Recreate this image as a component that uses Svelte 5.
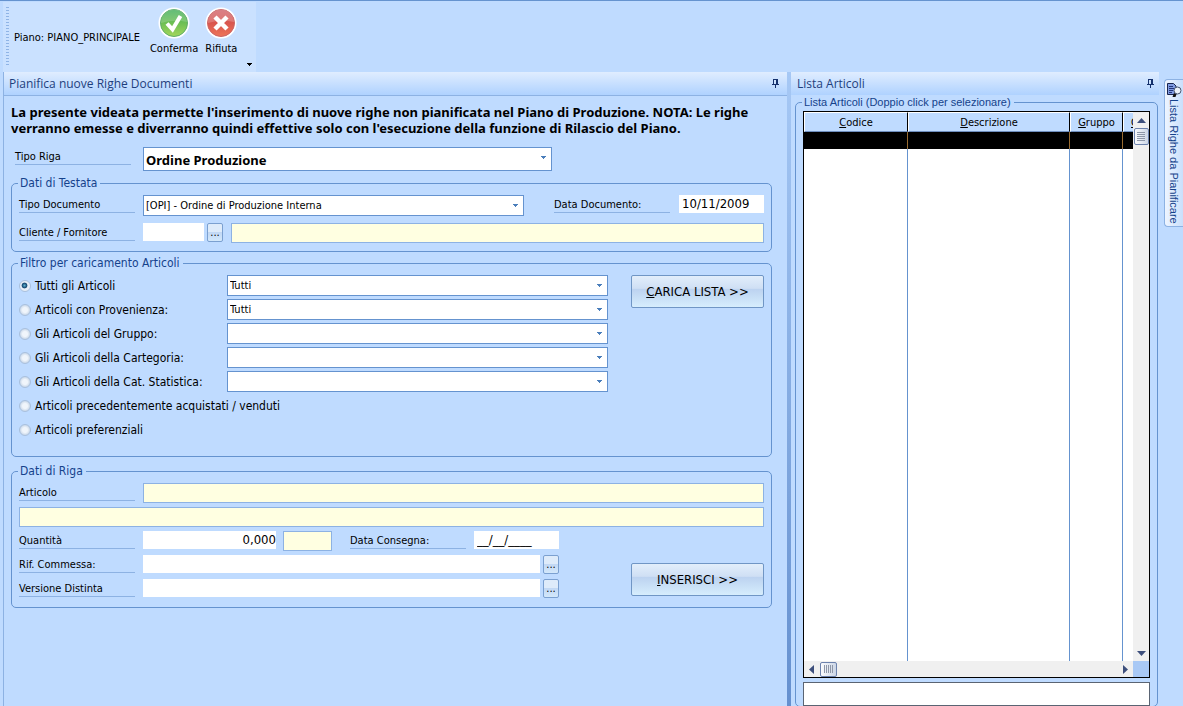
<script>
	let rowType = $state("Ordine Produzione");
	let docType = $state("[OPI] - Ordine di Produzione Interna");
	let docDate = $state("10/11/2009");
	let quantity = $state("0,000");
	let deliveryDate = $state("__/__/____");
	let filter = $state("tutti");

	const filters = [
		{ id: "tutti", label: "Tutti gli Articoli", options: ["Tutti"] },
		{ id: "provenienza", label: "Articoli con Provenienza:", options: ["Tutti"] },
		{ id: "gruppo", label: "Gli Articoli del Gruppo:", options: [""] },
		{ id: "categoria", label: "Gli Articoli della Cartegoria:", options: [""] },
		{ id: "statistica", label: "Gli Articoli della Cat. Statistica:", options: [""] },
		{ id: "precedenti", label: "Articoli precedentemente acquistati / venduti" },
		{ id: "preferenziali", label: "Articoli preferenziali" }
	];
</script>

{#snippet caret()}
	<svg class="caret" width="5" height="3" viewBox="0 0 5 3" shape-rendering="crispEdges"><path d="M0 0h5v1h-1v1h-1v1h-1v-1h-1v-1h-1z" fill="#4a7ebb" /></svg>
{/snippet}

{#snippet pin()}
	<button class="pin" aria-label="Blocca pannello">
		<svg width="7" height="9" viewBox="0 0 7 9" shape-rendering="crispEdges"><path d="M1 0h5v5h1v1h-3v3h-1v-3h-3v-1h1zM2 1v4h2v-4z" fill="#15316d" fill-rule="evenodd" /></svg>
	</button>
{/snippet}

<div class="window">
	<header>
		<div class="toolbar">
			<div class="grip"></div>
			<span class="plan">Piano: PIANO_PRINCIPALE</span>
			<button class="tool">
				<svg width="32" height="32" viewBox="0 0 32 32">
					<defs>
						<linearGradient id="ok" x1="0" y1="0" x2="0" y2="1">
							<stop offset="0" stop-color="#3fae5a" />
							<stop offset=".5" stop-color="#6dbf54" />
							<stop offset="1" stop-color="#a3d65a" />
						</linearGradient>
					</defs>
					<circle cx="16" cy="16" r="15.5" fill="#fff" />
					<circle cx="16" cy="16" r="13.5" fill="url(#ok)" stroke="#5fae68" />
					<path d="M3 16a13 13 0 0 1 26-1q-13-3-26 1z" fill="#fff" opacity=".18" />
					<path d="M9 16.500l5.500 6L22.500 9" fill="none" stroke="#fff" stroke-width="4" />
				</svg>
				Conferma
			</button>
			<button class="tool">
				<svg width="32" height="32" viewBox="0 0 32 32">
					<defs>
						<linearGradient id="no" x1="0" y1="0" x2="0" y2="1">
							<stop offset="0" stop-color="#cf6068" />
							<stop offset=".5" stop-color="#d9564e" />
							<stop offset="1" stop-color="#ee7558" />
						</linearGradient>
					</defs>
					<circle cx="16" cy="16" r="15.500" fill="#fff" />
					<circle cx="16" cy="16" r="13.500" fill="url(#no)" stroke="#cc6464" />
					<path d="M3 16a13 13 0 0 1 26-1q-13-3-26 1z" fill="#fff" opacity=".2" />
					<path d="M10 10l12 12m0-12l-12 12" stroke="#fff" stroke-width="4.500" />
				</svg>
				Rifiuta
			</button>
			<button class="more" aria-label="Altri comandi">
				<svg width="5" height="3" viewBox="0 0 5 3" shape-rendering="crispEdges"><path d="M0 0h5v1h-1v1h-1v1h-1v-1h-1v-1h-1z" /></svg>
			</button>
		</div>
	</header>

	<main>
		<section class="panel plan-panel">
			<div class="title"><h1>Pianifica nuove Righe Documenti</h1>{@render pin()}</div>
			<form class="body" onsubmit={(e) => e.preventDefault()}>
				<p class="intro">La presente videata permette l'inserimento di nuove righe non pianificata nel Piano di Produzione. NOTA: Le righe verranno emesse e diverranno quindi effettive solo con l'esecuzione della funzione di Rilascio del Piano.</p>

				<div class="line first">
					<label class="caption" for="rowType">Tipo Riga</label>
					<div class="combo large">
						<select id="rowType" bind:value={rowType}><option>Ordine Produzione</option></select>
						{@render caret()}
					</div>
				</div>

				<fieldset class="header-data">
					<legend>Dati di Testata</legend>
					<div class="rows">
						<div class="line">
							<label class="caption" for="docType">Tipo Documento</label>
							<div class="combo">
								<select id="docType" bind:value={docType}><option>[OPI] - Ordine di Produzione Interna</option></select>
								{@render caret()}
							</div>
							<label class="caption date-caption" for="docDate">Data Documento:</label>
							<input class="date" id="docDate" bind:value={docDate} />
						</div>
						<div class="line">
							<label class="caption" for="customer">Cliente / Fornitore</label>
							<input class="code" id="customer" />
							<button class="browse" aria-label="Cerca cliente">...</button>
							<input class="locked" aria-label="Ragione sociale" readonly />
						</div>
					</div>
				</fieldset>

				<fieldset class="filter">
					<legend>Filtro per caricamento Articoli</legend>
					<div class="split">
						<div class="rows">
							{#each filters as f}
								<div class="option">
									<label><input type="radio" name="filter" value={f.id} bind:group={filter} />{f.label}</label>
									{#if f.options}
										<div class="combo">
											<select aria-label={f.label}>
												{#each f.options as o}<option>{o}</option>{/each}
											</select>
											{@render caret()}
										</div>
									{/if}
								</div>
							{/each}
						</div>
						<button class="action"><span><u>C</u>ARICA LISTA &gt;&gt;</span></button>
					</div>
				</fieldset>

				<fieldset class="row-data">
					<legend>Dati di Riga</legend>
					<div class="rows">
						<div class="line">
							<label class="caption" for="article">Articolo</label>
							<input class="locked" id="article" readonly />
						</div>
						<div class="line">
							<input class="locked" aria-label="Descrizione articolo" readonly />
						</div>
						<div class="split">
							<div class="rows">
								<div class="line">
									<label class="caption" for="quantity">Quantità</label>
									<input class="quantity" id="quantity" bind:value={quantity} />
									<input class="locked unit" aria-label="Unità di misura" readonly />
									<label class="caption" for="delivery">Data Consegna:</label>
									<input class="date" id="delivery" bind:value={deliveryDate} />
								</div>
								<div class="line">
									<label class="caption" for="order">Rif. Commessa:</label>
									<input class="wide" id="order" />
									<button class="browse" aria-label="Cerca commessa">...</button>
								</div>
								<div class="line">
									<label class="caption" for="version">Versione Distinta</label>
									<input class="wide" id="version" />
									<button class="browse" aria-label="Cerca versione">...</button>
								</div>
							</div>
							<button class="action"><span><u>I</u>NSERISCI &gt;&gt;</span></button>
						</div>
					</div>
				</fieldset>
			</form>
		</section>

		<div class="splitter"></div>

		<section class="panel list-panel">
			<div class="title"><h1>Lista Articoli</h1>{@render pin()}</div>
			<fieldset class="list">
				<legend>Lista Articoli (Doppio click per selezionare)</legend>
				<div class="list-body">
					<div class="grid">
						<div class="table-area">
							<table>
								<colgroup><col class="c1" /><col class="c2" /><col class="c3" /><col /></colgroup>
								<thead>
									<tr>
										<th><u>C</u>odice</th>
										<th><u>D</u>escrizione</th>
										<th><u>G</u>ruppo</th>
										<th class="cut"><u>C</u></th>
									</tr>
								</thead>
								<tbody>
									<tr class="current"><td></td><td></td><td></td><td></td></tr>
									<tr><td></td><td></td><td></td><td></td></tr>
								</tbody>
							</table>
						</div>
						<div class="vbar">
							<svg width="9" height="5" viewBox="0 0 9 5"><path d="M0 5L4.500 0 9 5z" fill="#3d4f7c" /></svg>
							<div class="thumb">
								<svg width="8" height="9" viewBox="0 0 8 9" shape-rendering="crispEdges"><path d="M0 0h8v1H0zM0 2h8v1H0zM0 4h8v1H0zM0 6h8v1H0zM0 8h8v1H0z" fill="#8e97a8" /></svg>
							</div>
							<svg class="end" width="9" height="5" viewBox="0 0 9 5"><path d="M0 0L4.500 5 9 0z" fill="#3d4f7c" /></svg>
						</div>
						<div class="hbar">
							<svg width="5" height="9" viewBox="0 0 5 9"><path d="M5 0L0 4.500 5 9z" fill="#3d4f7c" /></svg>
							<div class="thumb">
								<svg width="9" height="8" viewBox="0 0 9 8" shape-rendering="crispEdges"><path d="M0 0h1v8H0zM2 0h1v8H2zM4 0h1v8H4zM6 0h1v8H6zM8 0h1v8H8z" fill="#8e97a8" /></svg>
							</div>
							<svg class="end" width="5" height="9" viewBox="0 0 5 9"><path d="M0 0L5 4.500 0 9z" fill="#3d4f7c" /></svg>
						</div>
						<div class="corner"></div>
					</div>
					<input class="search" aria-label="Ricerca articolo" />
				</div>
			</fieldset>
		</section>

		<aside>
			<button class="tab">
				<svg width="16" height="16" viewBox="0 0 16 16">
					<path d="M1.500 1.500h6l2.500 2.500v8.500h-8.500z" fill="#7f9ae0" stroke="#18254f" />
					<path d="M3 4.500h4M3 6.500h5M3 8.500h4M3 10.500h3" stroke="#22357a" />
					<path d="M8 11l-1.500 4h3l1-3z" fill="#111" />
					<circle cx="11.500" cy="8.500" r="3.500" fill="#edf3fa" stroke="#46536e" />
				</svg>
				<span>Lista Righe da Pianificare</span>
			</button>
		</aside>
	</main>
</div>

<style>
:global(body) {
	margin: 0;
	background: #bfdbff;
}

.window {
	--line: #6593cf;
	--soft: #8db2e3;
	--navy: #15428b;
	--ui: "DejaVu Sans Condensed", "DejaVu Sans", Tahoma, sans-serif;
	display: flex;
	flex-direction: column;
	height: 100vh;
	min-height: 640px;
	overflow: hidden;
	background: #bfdbff;
	font: 11px/14px var(--ui);
	color: #000;
}

.window * {
	box-sizing: border-box;
}

button, input, select {
	margin: 0;
	padding: 0;
	border: 0;
	border-radius: 0;
	font: inherit;
	color: inherit;
	background: none;
}

header {
	display: flex;
	flex: none;
	height: 72px;
	padding: 1px 0 0 3px;
	border-top: 1px solid var(--line);
}

.toolbar {
	position: relative;
	display: flex;
	align-items: flex-start;
	padding: 5px 12px 0 3px;
	background: #cae1ff;
}

.grip {
	width: 3px;
	height: 60px;
	background: repeating-linear-gradient(#8fb4e6 0 1px, #cae1ff 1px 3px);
}

.plan {
	margin: 24px 10px 0 5px;
}

.tool {
	display: flex;
	flex-direction: column;
	align-items: center;
	gap: 3px;
	margin-right: 7px;
}

.more {
	position: absolute;
	right: 4px;
	bottom: 6px;
	display: flex;
}

main {
	display: grid;
	grid-template-columns: minmax(0, 784fr) 4px minmax(0, 368fr) 24px;
	flex: 1;
	min-height: 0;
	padding-left: 3px;
}

.panel {
	display: flex;
	flex-direction: column;
	min-width: 0;
	min-height: 0;
}

.plan-panel {
	border-left: 1px solid var(--soft);
}

.title {
	display: flex;
	flex: none;
	align-items: center;
	justify-content: space-between;
	height: 23px;
	padding: 0 8px 0 5px;
	background: linear-gradient(#e0edff, #afd2ff);
}

.plan-panel .title {
	height: 24px;
	border-bottom: 1px solid var(--soft);
}

.list-panel .title {
	padding: 0 5px 0 6px;
}

h1 {
	margin: 0;
	font: 12px/16px "Open Sans", "Segoe UI", sans-serif;
	color: #1e3f7d;
}

.pin {
	display: flex;
}

.body {
	flex: 1;
	padding: 8px 15px 0 7px;
}

.intro {
	margin: 0 0 11px;
	font-family: "Noto Sans", Tahoma, sans-serif;
	font-size: 13px;
	font-weight: bold;
	line-height: 16px;
}

.line {
	display: flex;
	align-items: flex-start;
	height: 20px;
}

.line.first {
	height: 28px;
	padding-left: 4px;
}

.caption {
	flex: none;
	width: 116px;
	height: 18px;
	margin-right: 8px;
	padding-top: 3px;
	border-bottom: 1px solid var(--soft);
	white-space: nowrap;
}

.first .caption {
	margin-right: 12px;
}

.date-caption {
	margin-left: 30px;
}

.combo {
	position: relative;
	flex: none;
	width: 381px;
	height: 21px;
}

.combo select {
	display: block;
	width: 100%;
	height: 100%;
	padding: 1px 0 0 2px;
	border: 1px solid var(--line);
	background: #fff;
	appearance: none;
}

.combo.large {
	width: 409px;
	height: 24px;
	font-family: "Noto Sans", Tahoma, sans-serif;
	font-size: 13px;
	font-weight: bold;
}

.caret {
	position: absolute;
	top: 9px;
	right: 6px;
	pointer-events: none;
}

fieldset {
	min-width: 0;
	margin: 0;
	padding: 0 7px;
	border: 1px solid var(--line);
	border-radius: 5px;
}

legend {
	margin-left: -1px;
	padding: 0 3px 0 2px;
	font-size: 12px;
	line-height: 16px;
	color: var(--navy);
}

.rows {
	display: flex;
	flex-direction: column;
	gap: 4px;
}

.header-data {
	height: 77px;
	margin-bottom: 3px;
}

.header-data .rows {
	gap: 8px;
	padding-top: 4px;
}

.filter {
	height: 202px;
	margin-bottom: 6px;
}

.filter .split {
	padding-top: 4px;
}

.row-data > .rows {
	padding: 4px 0 8px;
}

.split {
	display: flex;
	justify-content: space-between;
}

.row-data .action {
	align-self: flex-end;
	margin-bottom: 3px;
}

.filter .rows {
	gap: 3px;
}

.option {
	display: flex;
	height: 21px;
}

.option label {
	display: flex;
	align-items: center;
	width: 208px;
	font-size: 12px;
	white-space: nowrap;
}

input[type="radio"] {
	flex: none;
	width: 12px;
	height: 12px;
	margin-right: 4px;
	border: 1px solid #a9c0dd;
	border-radius: 50%;
	background: radial-gradient(#f0f5fb 35%, #cbd9ea 70%);
	appearance: none;
}

input[type="radio"]:checked {
	background: radial-gradient(circle at 45% 45%, #5fb2d0, #10436c 32%, #e6eef7 42%);
}

.date, .code, .quantity, .wide {
	flex: none;
	height: 18px;
	background: #fff;
	font-size: 13px;
}

.date {
	width: 85px;
	padding: 0 3px 2px;
}

.header-data .date {
	margin-left: auto;
}

.code {
	width: 61px;
	margin-right: 3px;
}

.quantity {
	width: 133px;
	margin-right: 7px;
	padding-bottom: 2px;
	text-align: right;
}

.wide {
	width: 397px;
	margin-right: 3px;
}

.locked {
	flex: 1;
	min-width: 0;
	height: 20px;
	border: 1px solid var(--soft);
	background: #ffffe1;
}

.locked.unit {
	flex: none;
	width: 49px;
	margin-right: 18px;
}

.browse {
	flex: none;
	width: 16px;
	height: 19px;
	border: 1px solid #7ba0d0;
	border-radius: 2px;
	background: linear-gradient(#deebfa 45%, #c2d8f4 50%, #d3e8fb);
}

.code + .browse {
	margin-right: 8px;
}

.action {
	flex: none;
	width: 133px;
	height: 33px;
	border: 1px solid #7096c5;
	border-radius: 2px;
	background: linear-gradient(#e2eefb, #cfdff4 40%, #bcd2f0 42%, #d6edfd);
	font-size: 13px;
}

.splitter {
	background: linear-gradient(#a6c8f5, #6590cf);
}

.list {
	flex: 1;
	min-height: 0;
	margin: 0 1px -1px 4px;
}

.list legend {
	font-family: "Liberation Sans", Arial, sans-serif;
	font-size: 11px;
	line-height: 15px;
}

.list-body {
	display: flex;
	flex-direction: column;
	gap: 4px;
	height: 100%;
	padding-top: 1px;
}

.grid {
	display: grid;
	grid-template-columns: minmax(0, 1fr) 16px;
	grid-template-rows: minmax(0, 1fr) 16px;
	flex: 1;
	min-height: 0;
	border: 1px solid #000;
	background: #fff;
}

.table-area {
	overflow: hidden;
}

table {
	width: 100%;
	height: 100%;
	border-collapse: separate;
	border-spacing: 0;
	table-layout: fixed;
}

.c1 {
	width: 104px;
}

.c2 {
	width: 162px;
}

.c3 {
	width: 53px;
}

th {
	height: 20px;
	padding: 1px 0 0;
	border-top: 1px solid #fff;
	border-right: 1px solid #000;
	border-bottom: 1px solid #6f8fbf;
	border-left: 1px solid #fff;
	background: #bfdbff;
	font-weight: normal;
	overflow: hidden;
}

th.cut {
	padding-left: 7px;
	border-right: 0;
	text-align: left;
}

td {
	padding: 0;
	border-right: 1px solid var(--line);
}

td:last-child {
	border-right: 0;
}

.current td {
	height: 17px;
	background: #000;
	border-color: #9a6c30;
}

.vbar, .hbar {
	display: flex;
	align-items: center;
	background: #f0f0f0;
}

.vbar {
	flex-direction: column;
	gap: 5px;
	padding: 6px 0 5px;
}

.hbar {
	gap: 6px;
	padding: 0 5px;
}

.end {
	margin-top: auto;
}

.hbar .end {
	margin: 0 0 0 auto;
}

.thumb {
	display: flex;
	align-items: center;
	justify-content: center;
	width: 15px;
	height: 17px;
	border: 1px solid #6c82ad;
	border-radius: 2px;
	background: linear-gradient(90deg, #fafbfd, #ccd6e6);
}

.hbar .thumb {
	width: 17px;
	height: 15px;
}

.corner {
	background: #a9c9f5;
}

.search {
	flex: none;
	height: 24px;
	border: 1px solid #5a6473;
	background: #fff;
}

aside {
	padding: 7px 0 0 5px;
}

.tab {
	display: flex;
	flex-direction: column;
	align-items: center;
	gap: 1px;
	width: 100%;
	padding: 2px 0;
	border: 1px solid var(--soft);
	border-right: 0;
	border-radius: 4px 0 0 4px;
	background: linear-gradient(90deg, #eef5ff, #c9dffc);
	font-family: "Liberation Sans", Arial, sans-serif;
	color: var(--navy);
}

.tab span {
	writing-mode: vertical-rl;
}
</style>
